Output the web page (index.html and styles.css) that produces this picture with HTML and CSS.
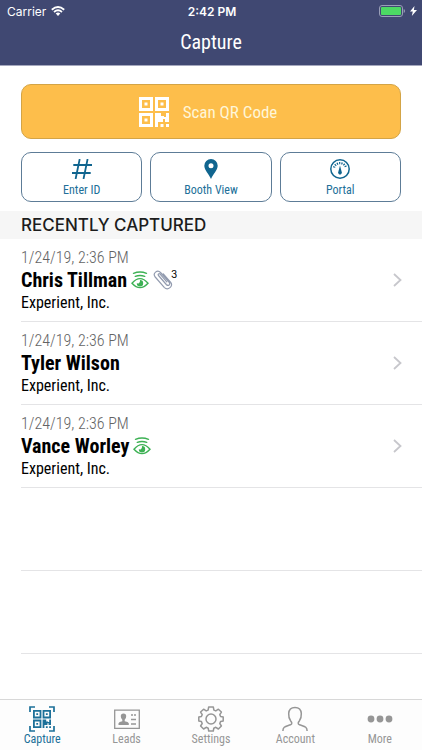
FILE: index.html
```html
<!DOCTYPE html>
<html lang="en">
<head>
  <meta charset="UTF-8" />
  <meta name="viewport" content="width=device-width, initial-scale=1.0"/>
  <title>Capture</title>
  <link rel="stylesheet" href="styles.css">
</head>
<body>

<!-- shared icons -->
<svg class="sprite" aria-hidden="true">
  <symbol id="qr" viewBox="0 0 30 30">
    <path fill-rule="evenodd" d="M0 0H14V14H0ZM3 3V11H11V3ZM5.500 5.500H8.500V8.500H5.500ZM16 0H30V14H16ZM19 3V11H27V3ZM21.500 5.500H24.500V8.500H21.500ZM0 16H14V30H0ZM3 19V27H11V19ZM5.500 21.500H8.500V24.500H5.500Z"/>
    <path d="M16 16H22V19H25V20H27V16H30V25H26V22H24V25H19V30H16ZM21.500 27H24.500V30H21.500ZM27 27H30V30H27Z"/>
  </symbol>
  <symbol id="eye" viewBox="0 0 18 18">
    <path fill="none" stroke="currentColor" stroke-width="1.400" stroke-linecap="round" d="M2.500 2.300Q9 -.4 15.500 2.300M4.300 5.400Q9 3.500 13.700 5.400M1 12.200Q9 3 17 12.200Q9 21 1 12.200Z"/>
    <path d="M9 9A3.200 3.200 0 1 1 5.800 12.200L7.600 12.400Q9.400 12 9 9Z"/>
  </symbol>
  <symbol id="chevron" viewBox="0 0 9 14">
    <path fill="none" stroke="currentColor" stroke-width="1.800" d="M1 1L7.500 7L1 13"/>
  </symbol>
</svg>

<header class="header">
  <div class="status">
    <span class="carrier">Carrier
      <svg class="wifi" viewBox="0 0 14 10">
        <path fill="none" stroke="currentColor" stroke-width="1.800" d="M.8 3.700Q7 -1.600 13.200 3.700M3 6Q7 2.600 11 6"/>
        <path d="M4.700 7.500Q7 5.700 9.300 7.500L7 10Z"/>
      </svg>
    </span>
    <span class="time">2:42 PM</span>
    <span class="power">
      <svg class="battery" viewBox="0 0 26 12">
        <rect x=".5" y=".5" width="23" height="11" rx="2.500" fill="none" stroke="#9a9fb8"/>
        <rect x="2" y="2" width="20" height="8" rx="1" fill="#4cd964"/>
        <path fill="#9a9fb8" d="M24.700 4Q26 4.500 26 6T24.700 8Z"/>
      </svg>
      <svg class="bolt" viewBox="0 0 7 10"><path d="M4.500 0L0 5.600H2.800L1.800 10L7 4.100H3.900Z"/></svg>
    </span>
  </div>
  <h1>Capture</h1>
</header>

<main>
  <div class="actions">
    <button class="scan"><svg class="scan-icon"><use href="#qr"/></svg>Scan QR Code</button>
    <div class="action-row">
      <button class="action">
        <svg class="action-icon" viewBox="0 0 20 20"><path fill="none" stroke="currentColor" stroke-width="1.800" d="M7.700 0L3.600 20M15.600 0L11.500 20M1.300 6H20M0 14H18.700"/></svg>
        Enter ID
      </button>
      <button class="action">
        <svg class="action-icon" viewBox="0 0 20 20"><path fill-rule="evenodd" d="M10 0A6.700 6.700 0 0 0 3.300 6.700C3.300 11 8 15 10 20C12 15 16.700 11 16.700 6.700A6.700 6.700 0 0 0 10 0ZM10 4.300A2.500 2.500 0 1 1 10 9.300A2.500 2.500 0 1 1 10 4.300Z"/></svg>
        Booth View
      </button>
      <button class="action">
        <svg class="action-icon" viewBox="0 0 20 20">
          <circle cx="10" cy="10" r="9.200" fill="none" stroke="currentColor" stroke-width="1.500"/>
          <path fill="none" stroke="currentColor" stroke-width="2.200" stroke-dasharray="1.200 1.100" d="M4 8.500A6.300 6.300 0 0 1 16 8.500"/>
          <path d="M10 6.500L11.600 12.500A1.900 1.900 0 1 1 8.400 12.500Z"/>
        </svg>
        Portal
      </button>
    </div>
  </div>

  <h2>RECENTLY CAPTURED</h2>
  <ul class="leads">
    <li><a class="lead" href="#">
      <span class="info">
        <span class="date">1/24/19, 2:36 PM</span>
        <span class="name">Chris Tillman
          <svg class="eye"><use href="#eye"/></svg>
          <svg class="clip" viewBox="0 0 20 20"><path fill="none" stroke="#929baf" stroke-width="1.200" stroke-linecap="round" d="M5.500 5.500L13.300 14.500C15.300 16.700 17.900 14.500 16 12.200L7.500 2.500C4.400 -.8 -.8 3.300 2.200 7L11.200 17.300C14.900 21 20.800 16.200 17.700 12.300L10.300 3.800M5.500 5.500C4.600 4.300 6 3 7.100 4.100L13.800 11.800"/></svg>
          <sup>3</sup>
        </span>
        <span class="company">Experient, Inc.</span>
      </span>
      <svg class="chevron"><use href="#chevron"/></svg>
    </a></li>
    <li><a class="lead" href="#">
      <span class="info">
        <span class="date">1/24/19, 2:36 PM</span>
        <span class="name">Tyler Wilson</span>
        <span class="company">Experient, Inc.</span>
      </span>
      <svg class="chevron"><use href="#chevron"/></svg>
    </a></li>
    <li><a class="lead" href="#">
      <span class="info">
        <span class="date">1/24/19, 2:36 PM</span>
        <span class="name">Vance Worley
          <svg class="eye"><use href="#eye"/></svg>
        </span>
        <span class="company">Experient, Inc.</span>
      </span>
      <svg class="chevron"><use href="#chevron"/></svg>
    </a></li>
    <li></li>
    <li></li>
  </ul>
</main>

<nav class="tabs">
  <a class="tab active" href="#">
    <svg class="tab-icon" viewBox="0 0 26 26">
      <path fill="none" stroke="currentColor" stroke-width="1.700" d="M1 6V1H6M20 1H25V6M25 20V25H20M6 25H1V20"/>
      <use href="#qr" x="4" y="4" width="18" height="18"/>
    </svg>
    Capture
  </a>
  <a class="tab" href="#">
    <svg class="tab-icon" viewBox="0 0 26 26">
      <path fill="none" stroke="currentColor" stroke-width="1.300" d="M.7 4.200H25.300V22.300H.7Z"/>
      <path d="M4.500 19V17.200Q5 16 8.300 15.300V13.800Q6.800 12.500 6.800 10.200Q6.800 7.600 9.500 7.600T12.200 10.200Q12.200 12.500 10.700 13.800V15.300Q14.300 16 14.800 17.200V19Z"/>
      <path fill="none" stroke="currentColor" stroke-width="1.400" d="M17 9H19M20 9H22M17 13.500H22M17 18H22"/>
    </svg>
    Leads
  </a>
  <a class="tab" href="#">
    <svg class="tab-icon" viewBox="0 0 26 26">
      <g fill="none" stroke="currentColor" stroke-width="1.500" stroke-linejoin="round">
        <path d="M10.700 1H15.300L15.900 4.100L17.800 4.900L20.400 3.200L23.400 6L21.800 8.700L22.600 10.500L25.200 11V15L22.600 15.500L21.800 17.500L23.400 20L20.400 23L17.800 21.300L15.800 22.200L15.300 25H10.700L10.200 22.200L8.200 21.300L5.600 23L2.600 20L4.200 17.500L3.400 15.500L.8 15V11L3.400 10.500L4.200 8.700L2.600 6L5.600 3.200L8.200 4.900L10.100 4.100Z"/>
        <circle cx="13" cy="13" r="5"/>
      </g>
    </svg>
    Settings
  </a>
  <a class="tab" href="#">
    <svg class="tab-icon" viewBox="0 0 26 26"><path fill="none" stroke="currentColor" stroke-width="1.500" d="M.9 25C.9 20.500 3.500 20.500 8.500 18.700C10.500 18 9.900 16.400 8.700 15C6.800 12.500 6.500 10.500 6.700 7.500C6.900 3.500 9.400 1.400 13 1.400S19.100 3.500 19.300 7.500C19.500 10.500 19.200 12.500 17.300 15C16.100 16.400 15.500 18 17.500 18.700C22.500 20.500 25.100 20.500 25.100 25"/></svg>
    Account
  </a>
  <a class="tab" href="#">
    <svg class="tab-icon" viewBox="0 0 26 26"><circle cx="4" cy="13" r="3.400"/><circle cx="13" cy="13" r="3.400"/><circle cx="22" cy="13" r="3.400"/></svg>
    More
  </a>
</nav>

</body>
</html>
```

FILE: styles.css
```css
* { box-sizing: border-box; }
body {
  margin: 0;
  min-height: 100vh;
  display: flex;
  flex-direction: column;
  background: #fff;
  color: #000;
  font-family: "Avenir Next Condensed", "Roboto Condensed", "Open Sans Condensed", "Liberation Sans Narrow", "DejaVu Sans Condensed", sans-serif;
}
svg { fill: currentColor; flex: none; }
a { color: inherit; text-decoration: none; }
button { font-family: inherit; cursor: pointer; }
.sprite { display: none; }
.header {
  background: #404872;
  color: #fff;
  border-bottom: 1px solid #a5a8be;
}
.status {
  display: grid;
  grid-template-columns: 1fr auto 1fr;
  align-items: center;
  height: 22px;
  padding: 0 5px 0 7px;
  font-family: Inter, sans-serif;
  font-size: 12px;
}
.carrier, .power { display: flex; align-items: center; gap: 5px; }
.power { justify-content: flex-end; }
.time { font-weight: 600; }
.wifi { width: 14px; height: 10px; }
.battery { width: 26px; height: 12px; }
.bolt { width: 7px; height: 10px; }
h1 {
  margin: 0;
  font-size: 20px;
  font-weight: 400;
  line-height: 40px;
  height: 43px;
  text-align: center;
}
main { flex: 1; }
.actions {
  display: flex;
  flex-direction: column;
  gap: 13px;
  padding: 18px 21px 9px;
}
.scan {
  display: flex;
  align-items: center;
  justify-content: center;
  gap: 14px;
  height: 55px;
  padding: 0 6px 0 0;
  background: #fdbe4b;
  border: 1px solid #d3a446;
  border-radius: 10px;
  color: #fff6d8;
  font-size: 17px;
  font-weight: 400;
}
.scan-icon { width: 30px; height: 30px; color: #fff; }
.action-row {
  display: grid;
  grid-template-columns: repeat(3, 1fr);
  gap: 8px;
}
.action {
  display: flex;
  flex-direction: column;
  align-items: center;
  gap: 1px;
  height: 50px;
  padding: 6px 0 0;
  background: #fff;
  border: 1px solid #5d7c97;
  border-radius: 10px;
  color: #216f99;
  font-size: 12px;
  line-height: 20px;
}
.action-icon { width: 20px; height: 20px; color: #10658f; }
h2 {
  margin: 0;
  padding: 0 21px;
  background: #f6f6f6;
  color: #1c1c1c;
  font-family: Inter, sans-serif;
  font-size: 17px;
  font-weight: 500;
  line-height: 28px;
}
.leads { list-style: none; margin: 0; padding: 0 0 0 21px; }
.leads li { height: 83px; border-bottom: 1px solid #e4e4e6; }
.lead {
  display: flex;
  align-items: center;
  justify-content: space-between;
  height: 100%;
  padding-right: 20px;
}
.info { display: flex; flex-direction: column; }
.date { color: #636363; font-size: 16px; font-weight: 300; line-height: 21px; }
.name {
  display: flex;
  align-items: center;
  gap: 4px;
  font-size: 20px;
  font-weight: 700;
  line-height: 24px;
}
.company { font-size: 16px; font-weight: 400; line-height: 21px; }
.eye { width: 18px; height: 18px; color: #3db154; }
.clip { width: 20px; height: 20px; }
.name sup {
  align-self: flex-start;
  margin-left: -6px;
  font-family: Inter, sans-serif;
  font-size: 10px;
  font-weight: 400;
  line-height: 12px;
}
.chevron { width: 9px; height: 14px; color: #c7c7cc; }
.tabs {
  display: grid;
  grid-template-columns: repeat(5, 1fr);
  height: 51px;
  padding-top: 6px;
  background: #fdfdfd;
  border-top: 1px solid #d8d8d8;
}
.tab {
  display: flex;
  flex-direction: column;
  align-items: center;
  color: #969696;
  font-size: 12px;
  line-height: 15px;
}
.tab-icon { width: 26px; height: 26px; }
.active { color: #1c7099; }
```
